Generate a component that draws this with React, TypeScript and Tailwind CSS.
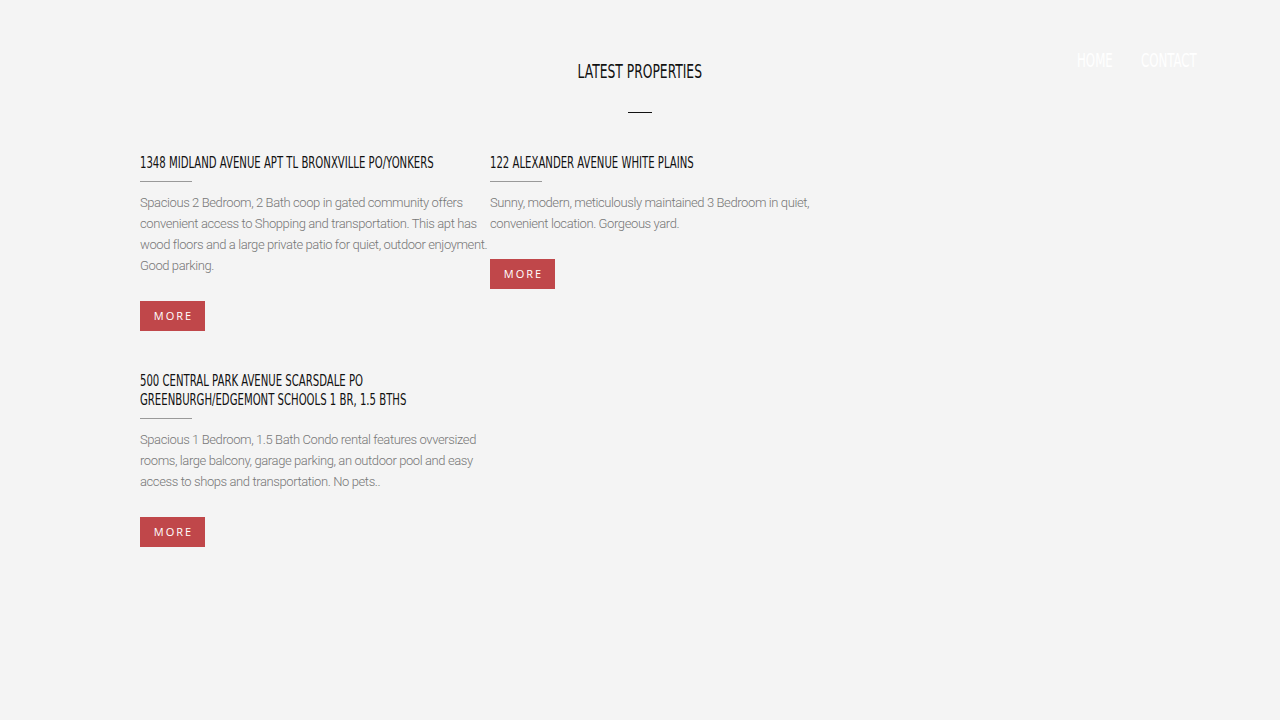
import * as React from "react";

const properties = [
    {
        title: "1348 Midland Avenue Apt TL Bronxville PO/Yonkers",
        text: "Spacious 2 Bedroom, 2 Bath coop in gated community offers convenient access to Shopping and transportation. This apt has wood floors and a large private patio for quiet, outdoor enjoyment. Good parking.",
    },
    {
        title: "122 Alexander Avenue White Plains",
        text: "Sunny, modern, meticulously maintained 3 Bedroom in quiet, convenient location. Gorgeous yard.",
    },
    {
        title: "500 Central Park Avenue Scarsdale PO Greenburgh/Edgemont Schools 1 BR, 1.5 BTHS",
        text: "Spacious 1 Bedroom, 1.5 Bath Condo rental features ovversized rooms, large balcony, garage parking, an outdoor pool and easy access to shops and transportation. No pets..",
    },
];

// condensed display face, narrowed to the Oswald-like width of the original
const display = "font-['DejaVu_Sans_Condensed','DejaVu_Sans',sans-serif] uppercase";

export default function App() {
    return (
        <div className="relative min-h-[720px] w-full bg-[#f4f4f4]">
            {/* Header nav */}
            <nav className={`absolute top-[49px] right-[81px] flex gap-[28px] text-[19px] leading-[22px] text-white ${display}`}>
                <a href="#" className="block w-[36px]">
                    <span className="inline-block origin-left scale-x-[0.69] whitespace-nowrap">Home</span>
                </a>
                <a href="#" className="block w-[58px]">
                    <span className="inline-block origin-left scale-x-[0.69] whitespace-nowrap">Contact</span>
                </a>
            </nav>

            {/* Latest properties */}
            <section className="mx-auto w-[1000px] pt-[60px] pb-16">
                <h2 className={`text-center text-[20px] leading-[22px] text-[#111] ${display}`}>
                    <span className="inline-block scale-x-[0.685] whitespace-nowrap">Latest Properties</span>
                </h2>
                <div className="mx-auto mt-[30px] h-px w-[24px] bg-[#111]" />

                <div className="mt-[40px] flex flex-wrap">
                    {properties.map((p, i) => (
                        <div key={i} className={`w-[350px] ${i > 1 ? "mt-[40px]" : ""}`}>
                            <h3 className={`w-[498px] origin-left scale-x-[0.703] text-[16px] leading-[19px] text-[#111] ${display}`}>
                                {p.title}
                            </h3>
                            <div className="mt-[9px] h-px w-[52px] bg-[#999]" />
                            <p className="mt-[10px] font-['Roboto',sans-serif] text-[13px] font-light leading-[21px] tracking-[-0.4px] text-[#777]">
                                {p.text}
                            </p>
                            <button className="mt-[25px] flex h-[30px] w-[65px] items-center justify-center bg-[#c0474a] pl-[2px] font-['Open_Sans',sans-serif] text-[11px] font-medium tracking-[2px] text-white uppercase">
                                More
                            </button>
                        </div>
                    ))}
                </div>
            </section>
        </div>
    );
}
